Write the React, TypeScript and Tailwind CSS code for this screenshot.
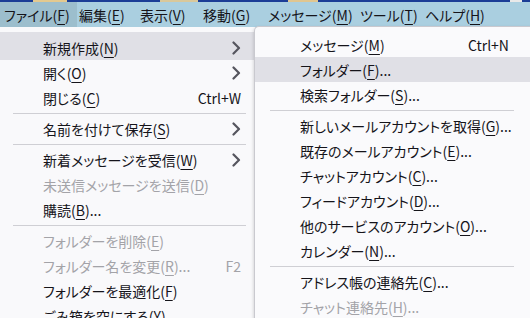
type Item =
  | { sep: true }
  | {
      sep?: false;
      label: string;
      k: string;
      dots?: boolean;
      sc?: string;
      arrow?: boolean;
      off?: boolean;
      hl?: boolean;
      first?: boolean;
    };

const fileMenu: Item[] = [
  { label: "新規作成", k: "N", arrow: true, hl: true, first: true },
  { label: "開く", k: "O", arrow: true },
  { label: "閉じる", k: "C", sc: "Ctrl+W" },
  { sep: true },
  { label: "名前を付けて保存", k: "S", arrow: true },
  { sep: true },
  { label: "新着メッセージを受信", k: "W", arrow: true },
  { label: "未送信メッセージを送信", k: "D", off: true },
  { label: "購読", k: "B", dots: true },
  { sep: true },
  { label: "フォルダーを削除", k: "E", off: true },
  { label: "フォルダー名を変更", k: "R", dots: true, off: true, sc: "F2" },
  { label: "フォルダーを最適化", k: "F" },
  { label: "ごみ箱を空にする", k: "Y" },
];

const newMenu: Item[] = [
  { label: "メッセージ", k: "M", sc: "Ctrl+N" },
  { label: "フォルダー", k: "F", dots: true, hl: true },
  { label: "検索フォルダー", k: "S", dots: true },
  { sep: true },
  { label: "新しいメールアカウントを取得", k: "G", dots: true },
  { label: "既存のメールアカウント", k: "E", dots: true },
  { label: "チャットアカウント", k: "C", dots: true },
  { label: "フィードアカウント", k: "D", dots: true },
  { label: "他のサービスのアカウント", k: "O", dots: true },
  { label: "カレンダー", k: "N", dots: true },
  { sep: true },
  { label: "アドレス帳の連絡先", k: "C", dots: true },
  { label: "チャット連絡先", k: "H", dots: true, off: true },
];

const bar = [
  { label: "ファイル", k: "F", w: "w-[75px]", hl: true },
  { label: "編集", k: "E", w: "w-[61px]" },
  { label: "表示", k: "V", w: "w-[63px]" },
  { label: "移動", k: "G", w: "w-[65px]" },
  { label: "メッセージ", k: "M", w: "w-[92px]" },
  { label: "ツール", k: "T", w: "w-[65px]" },
  { label: "ヘルプ", k: "H", w: "w-[80px]" },
];

function Label({ label, k, dots }: { label: string; k: string; dots?: boolean }) {
  return (
    <span className="whitespace-nowrap">
      {label}(<span className="underline underline-offset-[3px] decoration-1">{k}</span>){dots ? "..." : ""}
    </span>
  );
}

function Chevron() {
  return (
    <svg width="10" height="14" viewBox="0 0 10 14" fill="none">
      <path d="M2.5 1.5 L8 7 L2.5 12.5" stroke="#55555e" strokeWidth="2.2" strokeLinecap="round" strokeLinejoin="round" />
    </svg>
  );
}

function Menu({ items, textLeft, sepL, sepR, scRight }: { items: Item[]; textLeft: string; sepL: string; sepR: string; scRight: string }) {
  return (
    <div className="flex flex-col pt-[5px]">
      {items.map((it, i) =>
        it.sep ? (
          <div key={i} className={`h-[6px] flex items-center ${sepL} ${sepR}`}>
            <div className="h-px w-full bg-[#cfcfd4]" />
          </div>
        ) : (
          <div
            key={i}
            className={`flex items-center ${it.first ? "h-[28px] pt-[3px]" : "h-[25px]"} ${textLeft} ${scRight} ${it.hl ? "bg-[#e0e0e6]" : ""} ${it.off ? "text-[#a3a3a8]" : "text-[#15141a]"}`}
          >
            <Label label={it.label} k={it.k} dots={it.dots} />
            <div className="flex-1" />
            {it.sc && <span className="whitespace-nowrap">{it.sc}</span>}
            {it.arrow && <Chevron />}
          </div>
        )
      )}
    </div>
  );
}

export default function App() {
  return (
    <div
      className="w-[530px] h-[318px] overflow-hidden relative bg-[#f9f9fb] text-[14px] leading-none [font-feature-settings:'palt']"
      style={{ fontFamily: '"Noto Sans CJK JP", "Noto Sans", sans-serif' }}
    >
      <div className="h-[2px] flex bg-[#1b3d96]">
        <div className="w-[33px]" />
        <div className="w-[34px] bg-[#e3c98f]" />
        <div className="w-[93px]" />
        <div className="w-[38px] bg-[#d9c89b]" />
        <div className="w-[90px]" />
        <div className="w-[30px] bg-[#e0c690]" />
        <div className="flex-1" />
        <div className="w-[12px] bg-[#e9e9e9]" />
        <div className="w-[8px]" />
      </div>
      <div className="h-[25px] flex bg-[#aacfe0] text-[#15141a]">
        {bar.map((b) => (
          <div key={b.label} className={`${b.w} flex items-center`}>
            <div className={`h-full flex items-center pl-[4px] pr-[7px] ${b.hl ? "bg-[#9cbecd]" : ""}`}>
              <Label label={b.label} k={b.k} />
            </div>
          </div>
        ))}
      </div>
      <div className="absolute left-0 top-[27px] w-[254px] h-[300px] bg-[#f9f9fb]">
        <Menu items={fileMenu} textLeft="pl-[43px]" sepL="pl-[13px]" sepR="pr-[8px]" scRight="pr-[13px]" />
      </div>
      <div className="absolute left-[254px] top-[26px] w-[280px] h-[300px] bg-[#fafafc] border-l border-t border-[#c9c9cf] rounded-tl-[5px] shadow-[-1px_1px_3px_rgba(0,0,0,0.12)]">
        <Menu items={newMenu} textLeft="pl-[45px]" sepL="pl-[15px]" sepR="pr-[20px]" scRight="pr-[25px]" />
      </div>
    </div>
  );
}
